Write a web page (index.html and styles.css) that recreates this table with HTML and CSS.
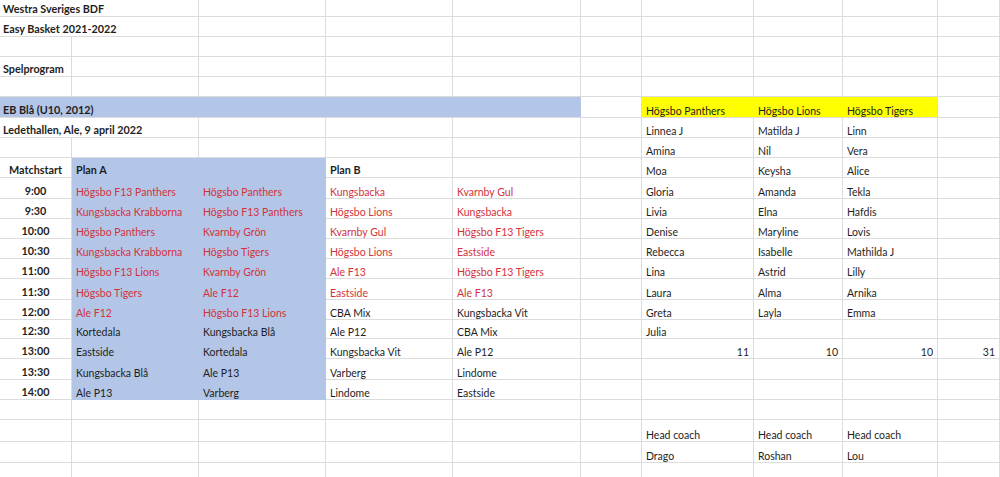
FILE: index.html
```html
<!DOCTYPE html>
<html lang="sv">
<head>
<meta charset="utf-8">
<title>Spelprogram</title>
<link rel="stylesheet" href="styles.css">
</head>
<body>
<div class="sheet">
  <div class="row h17"><div class="c s2 b">Westra Sveriges BDF</div><div class="c"></div><div class="c"></div><div class="c"></div><div class="c"></div><div class="c"></div><div class="c"></div><div class="c"></div><div class="c"></div></div>
  <div class="row"><div class="c s2 b">Easy Basket 2021-2022</div><div class="c"></div><div class="c"></div><div class="c"></div><div class="c"></div><div class="c"></div><div class="c"></div><div class="c"></div><div class="c"></div></div>
  <div class="row"><div class="c"></div><div class="c"></div><div class="c"></div><div class="c"></div><div class="c"></div><div class="c"></div><div class="c"></div><div class="c"></div><div class="c"></div><div class="c"></div></div>
  <div class="row"><div class="c b">Spelprogram</div><div class="c"></div><div class="c"></div><div class="c"></div><div class="c"></div><div class="c"></div><div class="c"></div><div class="c"></div><div class="c"></div><div class="c"></div></div>
  <div class="row"><div class="c"></div><div class="c"></div><div class="c"></div><div class="c"></div><div class="c"></div><div class="c"></div><div class="c"></div><div class="c"></div><div class="c"></div><div class="c"></div></div>
  <div class="row h21"><div class="c s5 b blue-band">EB Blå (U10, 2012)</div><div class="c"></div><div class="c yl">Högsbo Panthers</div><div class="c yl">Högsbo Lions</div><div class="c yl last">Högsbo Tigers</div><div class="c"></div></div>
  <div class="row"><div class="c s2 b">Ledethallen, Ale, 9 april 2022</div><div class="c"></div><div class="c"></div><div class="c"></div><div class="c"></div><div class="c">Linnea J</div><div class="c">Matilda J</div><div class="c">Linn</div><div class="c"></div></div>
  <div class="row"><div class="c"></div><div class="c"></div><div class="c"></div><div class="c"></div><div class="c"></div><div class="c"></div><div class="c">Amina</div><div class="c">Nil</div><div class="c">Vera</div><div class="c"></div></div>
  <div class="row"><div class="c b ctr">Matchstart</div><div class="c bl b">Plan A</div><div class="c bl end"></div><div class="c b">Plan B</div><div class="c"></div><div class="c"></div><div class="c">Moa</div><div class="c">Keysha</div><div class="c">Alice</div><div class="c"></div></div>
  <div class="row h21"><div class="c b ctr">9:00</div><div class="c bl red">Högsbo F13 Panthers</div><div class="c bl end red">Högsbo Panthers</div><div class="c red">Kungsbacka</div><div class="c red">Kvarnby Gul</div><div class="c"></div><div class="c">Gloria</div><div class="c">Amanda</div><div class="c">Tekla</div><div class="c"></div></div>
  <div class="row"><div class="c b ctr">9:30</div><div class="c bl red">Kungsbacka Krabborna</div><div class="c bl end red">Högsbo F13 Panthers</div><div class="c red">Högsbo Lions</div><div class="c red">Kungsbacka</div><div class="c"></div><div class="c">Livia</div><div class="c">Elna</div><div class="c">Hafdis</div><div class="c"></div></div>
  <div class="row"><div class="c b ctr">10:00</div><div class="c bl red">Högsbo Panthers</div><div class="c bl end red">Kvarnby Grön</div><div class="c red">Kvarnby Gul</div><div class="c red">Högsbo F13 Tigers</div><div class="c"></div><div class="c">Denise</div><div class="c">Maryline</div><div class="c">Lovis</div><div class="c"></div></div>
  <div class="row"><div class="c b ctr">10:30</div><div class="c bl red">Kungsbacka Krabborna</div><div class="c bl end red">Högsbo Tigers</div><div class="c red">Högsbo Lions</div><div class="c red">Eastside</div><div class="c"></div><div class="c">Rebecca</div><div class="c">Isabelle</div><div class="c">Mathilda J</div><div class="c"></div></div>
  <div class="row"><div class="c b ctr">11:00</div><div class="c bl red">Högsbo F13 Lions</div><div class="c bl end red">Kvarnby Grön</div><div class="c red">Ale F13</div><div class="c red">Högsbo F13 Tigers</div><div class="c"></div><div class="c">Lina</div><div class="c">Astrid</div><div class="c">Lilly</div><div class="c"></div></div>
  <div class="row h21"><div class="c b ctr">11:30</div><div class="c bl red">Högsbo Tigers</div><div class="c bl end red">Ale F12</div><div class="c red">Eastside</div><div class="c red">Ale F13</div><div class="c"></div><div class="c">Laura</div><div class="c">Alma</div><div class="c">Arnika</div><div class="c"></div></div>
  <div class="row"><div class="c b ctr">12:00</div><div class="c bl red">Ale F12</div><div class="c bl end red">Högsbo F13 Lions</div><div class="c">CBA Mix</div><div class="c">Kungsbacka Vit</div><div class="c"></div><div class="c">Greta</div><div class="c">Layla</div><div class="c">Emma</div><div class="c"></div></div>
  <div class="row h19"><div class="c b ctr">12:30</div><div class="c bl">Kortedala</div><div class="c bl end">Kungsbacka Blå</div><div class="c">Ale P12</div><div class="c">CBA Mix</div><div class="c"></div><div class="c">Julia</div><div class="c"></div><div class="c"></div><div class="c"></div></div>
  <div class="row"><div class="c b ctr">13:00</div><div class="c bl">Eastside</div><div class="c bl end">Kortedala</div><div class="c">Kungsbacka Vit</div><div class="c">Ale P12</div><div class="c"></div><div class="c num">11</div><div class="c num">10</div><div class="c num">10</div><div class="c num">31</div></div>
  <div class="row h21"><div class="c b ctr">13:30</div><div class="c bl">Kungsbacka Blå</div><div class="c bl end">Ale P13</div><div class="c">Varberg</div><div class="c">Lindome</div><div class="c"></div><div class="c"></div><div class="c"></div><div class="c"></div><div class="c"></div></div>
  <div class="row"><div class="c b ctr">14:00</div><div class="c bl">Ale P13</div><div class="c bl end">Varberg</div><div class="c">Lindome</div><div class="c">Eastside</div><div class="c"></div><div class="c"></div><div class="c"></div><div class="c"></div><div class="c"></div></div>
  <div class="row"><div class="c"></div><div class="c"></div><div class="c"></div><div class="c"></div><div class="c"></div><div class="c"></div><div class="c"></div><div class="c"></div><div class="c"></div><div class="c"></div></div>
  <div class="row h22"><div class="c"></div><div class="c"></div><div class="c"></div><div class="c"></div><div class="c"></div><div class="c"></div><div class="c">Head coach</div><div class="c">Head coach</div><div class="c">Head coach</div><div class="c"></div></div>
  <div class="row h21"><div class="c"></div><div class="c"></div><div class="c"></div><div class="c"></div><div class="c"></div><div class="c"></div><div class="c">Drago</div><div class="c">Roshan</div><div class="c">Lou</div><div class="c"></div></div>
  <div class="row h22"><div class="c"></div><div class="c"></div><div class="c"></div><div class="c"></div><div class="c"></div><div class="c"></div><div class="c"></div><div class="c"></div><div class="c"></div><div class="c"></div></div>
</div>
</body>
</html>
```

FILE: styles.css
```css
* { box-sizing: border-box; }
html, body { margin: 0; padding: 0; background: #fff; }
body {
  width: 1000px;
  height: 477px;
  overflow: hidden;
  font-family: Lato, "Liberation Sans", sans-serif;
  font-size: 10.5px;
  color: #1e1e1e;
}
.sheet { display: flex; flex-direction: column; }
.row {
  display: grid;
  grid-template-columns: 72px 127px 127px 127px 128px 61px 112px 89px 95px 62px;
  height: 20px;
}
.row.h17 { height: 17px; }
.row.h19 { height: 19px; }
.row.h21 { height: 21px; }
.row.h22 { height: 22px; }
.c {
  border-right: 1px solid #dcdcdc;
  border-bottom: 1px solid #dcdcdc;
  display: flex;
  align-items: flex-end;
  padding: 0 4px 1px 4px;
  white-space: nowrap;
  line-height: 1;
  min-width: 0;
}
.row .c:first-child { padding-left: 3px; }
.s2 { grid-column: span 2; }
.s5 { grid-column: span 5; }
.b { font-weight: 700; font-size: 10.8px; }
.ctr { justify-content: center; padding-left: 0; padding-right: 0; }
.row .c.ctr:first-child { padding-left: 0; }
.num { justify-content: flex-end; }
.red { color: #d2323c; }
.blue-band { background: #b4c6e7; border-right-color: #b4c6e7; }
.bl { background: #b4c6e7; border-color: #b4c6e7; border-right-color: #b4c6e7; }
.bl.end { border-right-color: #b4c6e7; }
.yl { background: #ffff00; border-right-color: #ffff00; }
.yl.last { border-right-color: #dcdcdc; }
```
